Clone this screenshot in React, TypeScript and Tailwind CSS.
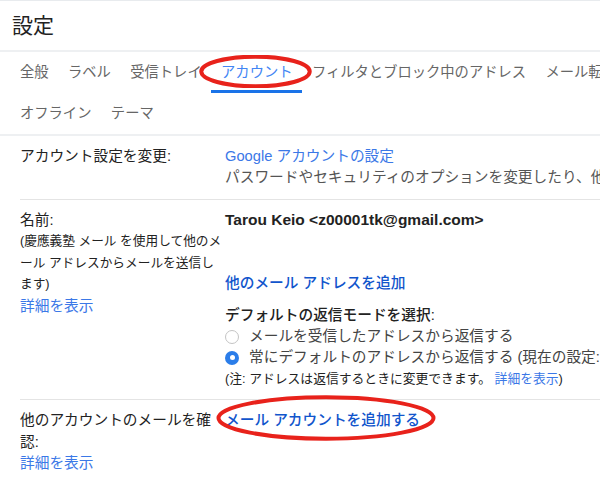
import React from 'react';

const FONT = { fontFamily: '"Liberation Sans", "Noto Sans CJK JP", sans-serif' };

const TABS_ROW1 = ['全般', 'ラベル', '受信トレイ', 'アカウント', 'フィルタとブロック中のアドレス', 'メール転送と POP/IMAP'];
const TABS_ROW2 = ['オフライン', 'テーマ'];

function Tab({ label, active }: { label: string; active?: boolean }) {
  return (
    <div className="relative flex h-full shrink-0 items-center px-[9.7px]">
      <span className={active ? 'text-[#4285f4]' : 'text-[#666]'}>{label}</span>
      {active && <div className="absolute bottom-[1px] left-0 right-0 h-[3px] bg-[#1a73e8]" />}
    </div>
  );
}

function Radio({ checked }: { checked?: boolean }) {
  return checked ? (
    <span className="flex h-[14px] w-[14px] shrink-0 items-center justify-center rounded-full bg-[#2b7de9]">
      <span className="h-[5px] w-[5px] rounded-full bg-white" />
    </span>
  ) : (
    <span className="h-[14px] w-[14px] shrink-0 rounded-full border border-[#c4c4c4] bg-white" />
  );
}

function Ellipse({ className }: { className: string }) {
  return (
    <svg className={`pointer-events-none absolute ${className}`} viewBox="0 0 100 40" preserveAspectRatio="none">
      <ellipse cx="50" cy="20" rx="48" ry="18" fill="none" stroke="#e8221b" strokeWidth="4" vectorEffect="non-scaling-stroke" />
    </svg>
  );
}

export default function App() {
  return (
    <div className="relative h-[484px] w-[600px] overflow-hidden bg-white text-[#222]" style={FONT}>
      <div className="h-[1px] bg-[#e8ebee]" />
      {/* Title */}
      <div className="flex h-[49px] items-center pl-[12px] text-[21px]">設定</div>
      <div className="h-[2px] bg-[#eef0f2]" />

      {/* Tabs */}
      <div className="flex h-[42px] whitespace-nowrap pl-[10.3px] text-[14.3px]">
        {TABS_ROW1.map((t) => (
          <Tab key={t} label={t} active={t === 'アカウント'} />
        ))}
      </div>
      <div className="flex h-[40px] whitespace-nowrap pl-[10.3px] text-[14.3px]">
        {TABS_ROW2.map((t) => (
          <Tab key={t} label={t} />
        ))}
      </div>
      <div className="h-[2px] bg-[#eef0f2]" />

      {/* Account settings */}
      <div className="flex pb-[11px] pl-[20px] pt-[10px] text-[14.7px] leading-[21px]">
        <div className="w-[205px] shrink-0">アカウント設定を変更:</div>
        <div className="whitespace-nowrap">
          <div className="text-[#3b78e7]">Google アカウントの設定</div>
          <div className="text-[#555]">パスワードやセキュリティのオプションを変更したり、他の Google サービスにアクセスしたりできます。</div>
        </div>
      </div>
      <div className="ml-[20px] h-[1px] bg-[#e4e4e4]" />

      {/* Name */}
      <div className="flex pb-[10px] pl-[20px] pt-[9px] text-[14.7px]">
        <div className="w-[205px] shrink-0">
          <div className="leading-[22px]">名前:</div>
          <div className="text-[12.7px] leading-[21.5px]">
            (慶應義塾 メール を使用して他のメール アドレスからメールを送信します)
          </div>
          <div className="leading-[21.5px] text-[#3b78e7]">詳細を表示</div>
        </div>
        <div className="whitespace-nowrap">
          <div className="text-[15.5px] font-bold leading-[22px]">Tarou Keio &lt;z00001tk@gmail.com&gt;</div>
          <div className="mt-[41px] font-medium leading-[22px] text-[#1155cc]">他のメール アドレスを追加</div>
          <div className="mt-[10px] font-medium leading-[22px]">デフォルトの返信モードを選択:</div>
          <div className="flex items-center gap-[10px] leading-[21px] text-[#444]">
            <Radio />
            <span>メールを受信したアドレスから返信する</span>
          </div>
          <div className="flex items-center gap-[10px] leading-[21px] text-[#444]">
            <Radio checked />
            <span>常にデフォルトのアドレスから返信する (現在の設定: z00001tk@gmail.com)</span>
          </div>
          <div className="text-[12.8px] leading-[21px]">
            (注: アドレスは返信するときに変更できます。 <span className="text-[#3b78e7]">詳細を表示</span>)
          </div>
        </div>
      </div>
      <div className="ml-[20px] h-[1px] bg-[#e4e4e4]" />

      {/* Check mail from other accounts */}
      <div className="flex pl-[20px] pt-[10px] text-[14.7px] leading-[21.5px]">
        <div className="w-[205px] shrink-0 pr-[2px]">
          <div>他のアカウントのメールを確認:</div>
          <div className="text-[#3b78e7]">詳細を表示</div>
        </div>
        <div className="font-medium text-[#1155cc]">メール アカウントを追加する</div>
      </div>

      <Ellipse className="left-[199px] top-[55px] h-[33px] w-[113px]" />
      <Ellipse className="left-[214px] top-[395px] h-[46px] w-[224px]" />
    </div>
  );
}
